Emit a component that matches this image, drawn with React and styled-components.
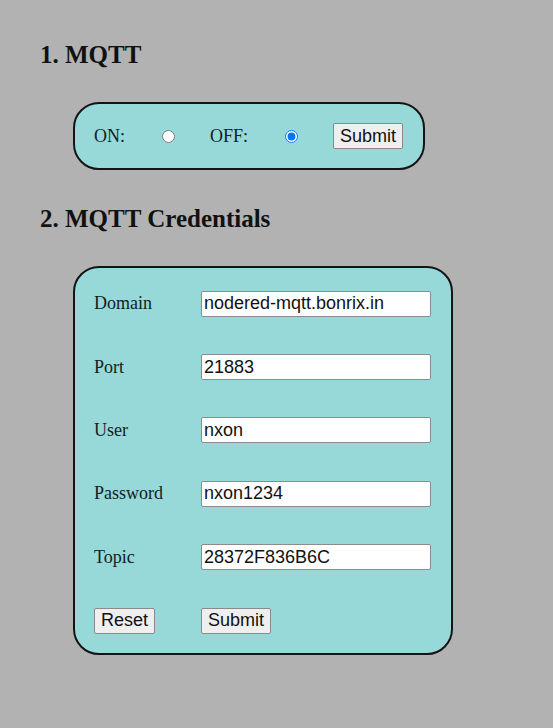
import React from 'react'
import styled, { createGlobalStyle } from 'styled-components'

const GlobalStyle = createGlobalStyle`
    html, body {
        margin: 0;
        background: #b2b2b2;
    }
    body {
        font-family: "Liberation Serif", "Times New Roman", serif;
        color: #111;
    }
`

const Page = styled.div`
    padding: 40px 0 40px 40px;
    min-height: 728px;
    box-sizing: border-box;
`
const Heading = styled.h2`
    margin: ${props => props.first ? "0" : "34px 0 0"};
    font-size: 25px;
    line-height: 29px;
    font-weight: bold;
    color: #111;
`
const Panel = styled.form`
    margin: 33px 0 0 33px;
    box-sizing: border-box;
    width: ${props => props.width}px;
    height: ${props => props.height}px;
    background: #97d8d8;
    border: 2px solid #141414;
    border-radius: 26px;
`
const ToggleRow = styled(Panel)`
    display: grid;
    grid-template-columns: 68px 48px 75px 48px auto;
    align-items: center;
    padding-left: 19px;
`
const CredGrid = styled(Panel)`
    display: grid;
    grid-template-columns: 107px 230px;
    grid-template-rows: repeat(6, 63.4px);
    align-items: center;
    padding: 4px 0 0 19px;
`
const Label = styled.label`
    font-size: 18px;
    color: #122;
`
const Radio = styled.input.attrs({ type: 'radio' })`
    margin: 1px 0 0;
    width: 13px;
    height: 13px;
`
const Field = styled.input`
    box-sizing: border-box;
    width: 230px;
    height: 26px;
    margin: 0;
    padding: 0 2px;
    border: 1px solid #8c8c8c;
    border-radius: 2px;
    background: #fff;
    font-family: "Liberation Sans", Arial, sans-serif;
    font-size: 18px;
    color: #111;
    outline: none;
`
const Button = styled.button`
    justify-self: start;
    box-sizing: border-box;
    height: 26px;
    margin: 0;
    padding: 0 6px;
    background: #efefef;
    border: 1px solid #8a8a8a;
    border-radius: 2px;
    font-family: "Liberation Sans", Arial, sans-serif;
    font-size: 18px;
    color: #111;
`

const fields = [
    { name: 'Domain', value: 'nodered-mqtt.bonrix.in' },
    { name: 'Port', value: '21883' },
    { name: 'User', value: 'nxon' },
    { name: 'Password', value: 'nxon1234' },
    { name: 'Topic', value: '28372F836B6C' },
]

export default function App() {
    return (
        <Page>
            <GlobalStyle />
            <Heading first>1. MQTT</Heading>
            <ToggleRow width={352} height={68} onSubmit={e => e.preventDefault()}>
                <Label>ON:</Label>
                <Radio name="mqtt" value="on" />
                <Label>OFF:</Label>
                <Radio name="mqtt" value="off" defaultChecked />
                <Button type="submit">Submit</Button>
            </ToggleRow>
            <Heading>2. MQTT Credentials</Heading>
            <CredGrid width={380} height={389} onSubmit={e => e.preventDefault()}>
                {fields.map(f => (
                    <React.Fragment key={f.name}>
                        <Label>{f.name}</Label>
                        <Field type="text" defaultValue={f.value} />
                    </React.Fragment>
                ))}
                <Button type="reset">Reset</Button>
                <Button type="submit">Submit</Button>
            </CredGrid>
        </Page>
    )
}
